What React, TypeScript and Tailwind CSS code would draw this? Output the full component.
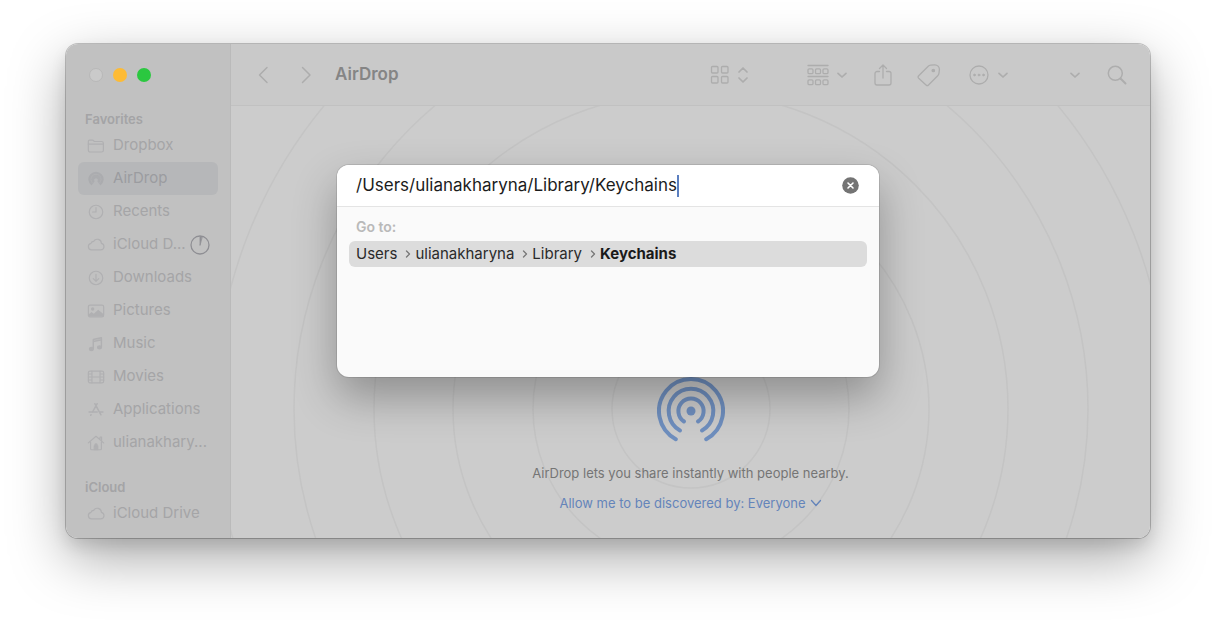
import React from "react";

type IconProps = { className?: string; children: React.ReactNode; box?: string };

function Icon({ className = "size-5", children, box = "0 0 20 20" }: IconProps) {
  return (
    <svg
      viewBox={box}
      className={`shrink-0 ${className}`}
      fill="none"
      stroke="currentColor"
      strokeWidth="1.3"
      strokeLinecap="round"
      strokeLinejoin="round"
      aria-hidden="true"
    >
      {children}
    </svg>
  );
}

const cloud = <path d="M5 15.5a3.7 3.7 0 0 1-.6-7.3 3 3 0 0 1 3-2.2 4.6 4.6 0 0 1 8.6 2.200a3.700 3.700 0 0 1-.7 7.300z" />;

const icons: Record<string, React.ReactNode> = {
  folder: (
    <>
      <path d="M1.500 6V4.800A1.300 1.300 0 0 1 2.800 3.500h3.700l1.700 1.500h8a2 2 0 0 1 2 2v7.700a2 2 0 0 1-2 2H3.500a2 2 0 0 1-2-2z" />
      <path d="M1.500 8h16.700" />
    </>
  ),
  airdrop: (
    <>
      <path d="M5 17.200A8.500 8.500 0 1 1 15 17.200L11.500 12.500a2 2 0 1 0-3 0z" stroke="none" fill="currentColor" />
      <path d="M6 14.500a5.700 5.700 0 1 1 8 0" stroke="#b6b7b9" strokeWidth="0.600" />
    </>
  ),
  clock: (
    <>
      <circle cx="10" cy="10" r="7.500" />
      <path d="M10 5v5H6.200" />
    </>
  ),
  cloud,
  download: (
    <>
      <circle cx="10" cy="10" r="7.500" />
      <path d="M10 6v7.500M7 10.700l3 3 3-3" />
    </>
  ),
  picture: (
    <>
      <rect x="1.500" y="3.500" width="17" height="13" rx="1.800" />
      <circle cx="6.300" cy="7.800" r="1.200" fill="currentColor" />
      <path d="M2 13.500l3-2.500 2.500 2 5-4.500 6 5V16H2z" fill="currentColor" stroke="none" />
    </>
  ),
  music: (
    <>
      <path d="M7 15V5l9-2v10.500M7 7.200l9-2" strokeWidth="1.600" />
      <ellipse cx="4.900" cy="15.500" rx="2.200" ry="1.800" fill="currentColor" />
      <ellipse cx="13.900" cy="13.700" rx="2.200" ry="1.800" fill="currentColor" />
    </>
  ),
  movie: (
    <>
      <rect x="1.500" y="3.500" width="17" height="13" rx="1.800" />
      <path d="M5.500 3.500v13M14.500 3.500v13M5.500 10h9M1.500 6.700h4M1.500 10h4M1.500 13.300h4M14.500 6.700h4M14.500 10h4M14.500 13.300h4" />
    </>
  ),
  apps: <path d="M8.700 3l6.800 12.300M11.300 3L6 12.500M4.500 15.200l-.4.700M2.300 12.300h9M14 12.300h3.700" strokeWidth="1.700" />,
  home: (
    <>
      <path d="M1.500 9.800L10 2.500l8.500 7.300M14.500 6V3.500h1.700v4M4 8.500v7.800c0 .7.400 1.200 1.200 1.200h9.600c.8 0 1.200-.5 1.200-1.200V8.500" />
      <path d="M8 17.500v-4.300h4v4.300z" fill="currentColor" />
      <circle cx="10" cy="12" r="1.200" fill="currentColor" />
    </>
  ),
};

function Chevron({ className = "h-[10px] w-[10px]" }: { className?: string }) {
  return (
    <Icon className={className} box="0 0 10 10">
      <path d="M1 3.300l4 3.700 4-3.700" strokeWidth="1.700" />
    </Icon>
  );
}

function SideItem({ icon, label, active, progress }: { icon: string; label: string; active?: boolean; progress?: boolean }) {
  return (
    <li>
      <a
        href="#"
        className={`flex h-[33px] items-center gap-2 rounded-md pr-2 pl-[9px] text-[15px] ${active ? "bg-[#b6b7b9] text-[#9b9ca0]" : "text-[#a5a5a7]"}`}
      >
        <Icon className={`h-[18px] w-[18px] ${active ? "text-[#abacaf]" : "text-[#b0b0b2]"}`}>{icons[icon]}</Icon>
        <span className="truncate">{label}</span>
        {progress && (
          <Icon className="-ml-1 size-5 text-[#8f8f94]">
            <circle cx="10" cy="10" r="9" />
            <path d="M10 10V1.500h2z" fill="currentColor" strokeWidth="0.800" />
          </Icon>
        )}
      </a>
    </li>
  );
}

const favorites = [
  { icon: "folder", label: "Dropbox" },
  { icon: "airdrop", label: "AirDrop", active: true },
  { icon: "clock", label: "Recents" },
  { icon: "cloud", label: "iCloud D...", progress: true },
  { icon: "download", label: "Downloads" },
  { icon: "picture", label: "Pictures" },
  { icon: "music", label: "Music" },
  { icon: "movie", label: "Movies" },
  { icon: "apps", label: "Applications" },
  { icon: "home", label: "ulianakhary..." },
];

function Sidebar() {
  return (
    <aside className="w-[165px] shrink-0 border-r border-[#bababa] bg-[#c1c1c1] px-3 pb-2">
      <div className="flex h-[62px] items-center gap-[10px] pl-[11px]">
        <button aria-label="Close" className="size-[14px] rounded-full border border-[#b8b8b8] bg-[#cacaca]" />
        <button aria-label="Minimize" className="size-[14px] rounded-full bg-[#fdbb35]" />
        <button aria-label="Zoom" className="size-[14px] rounded-full bg-[#2bc840]" />
      </div>
      <nav className="pt-[3px]">
        <h2 className="pl-[7px] text-[13px] leading-5 font-semibold text-[#a4a4a6]">Favorites</h2>
        <ul>
          {favorites.map((item) => (
            <SideItem key={item.label} {...item} />
          ))}
        </ul>
        <h2 className="mt-[18px] pl-[7px] text-[13px] leading-5 font-semibold text-[#a4a4a6]">iCloud</h2>
        <ul>
          <SideItem icon="cloud" label="iCloud Drive" />
        </ul>
      </nav>
    </aside>
  );
}

function Toolbar() {
  return (
    <header className="flex h-[62px] items-center border-b border-[#c1c1c1] bg-[#c9c9c9] px-[23px] text-[#adadad]">
      <button aria-label="Back">
        <Icon>
          <path d="M13 2.500L5.500 10l7.500 7.500" strokeWidth="1.500" />
        </Icon>
      </button>
      <button aria-label="Forward" className="ml-[22px]">
        <Icon>
          <path d="M6.500 2.500L14 10l-7.500 7.500" strokeWidth="1.500" />
        </Icon>
      </button>
      <h1 className="ml-[19px] text-[17px] font-semibold text-[#858585]">AirDrop</h1>
      <div className="ml-auto flex items-center">
        <button aria-label="View" className="flex items-center gap-2">
          <Icon>
            <rect x="1.500" y="1.500" width="6.500" height="6.500" rx="1" />
            <rect x="11.500" y="1.500" width="6.500" height="6.500" rx="1" />
            <rect x="1.500" y="11.500" width="6.500" height="6.500" rx="1" />
            <rect x="11.500" y="11.500" width="6.500" height="6.500" rx="1" />
          </Icon>
          <Icon className="h-4 w-[10px]" box="0 0 10 16">
            <path d="M1 5l4-4 4 4M1 11l4 4 4-4" strokeWidth="1.700" />
          </Icon>
        </button>
        <button aria-label="Group" className="ml-[59px] flex items-center gap-2">
          <Icon className="h-[22px] w-[22px]" box="0 0 22 22">
            <path d="M1 1.500h20M1 12.500h20" />
            {[1, 8.500, 16].map((x) => (
              <g key={x}>
                <rect x={x} y="4.800" width="5" height="4.800" rx="1.200" />
                <rect x={x} y="15.800" width="5" height="4.800" rx="1.200" />
              </g>
            ))}
          </Icon>
          <Chevron />
        </button>
        <button aria-label="Share" className="ml-[26px]">
          <Icon className="h-[22px] w-5" box="0 0 20 22">
            <path d="M6.500 7.500H4A2 2 0 0 0 2 9.500v9.500a2 2 0 0 0 2 2h12a2 2 0 0 0 2-2V9.500a2 2 0 0 0-2-2h-2.500M10 14V1.200M6.500 4.500L10 1l3.500 3.500" />
          </Icon>
        </button>
        <button aria-label="Tags" className="ml-6">
          <Icon className="h-6 w-6" box="0 0 24 24">
            <path d="M1.700 12.800L11 3.500c.8-.8 1.500-1.200 2.700-1.300l3.800-.4a4.500 4.500 0 0 1 4.900 4.900l-.4 3.300c-.1 1.100-.5 1.900-1.300 2.700l-9.200 9.300c-.8.800-1.700.8-2.500 0l-7.300-6.700c-.8-.8-.8-1.700 0-2.500z" />
            <circle cx="16.300" cy="7.500" r="1.200" fill="currentColor" />
          </Icon>
        </button>
        <button aria-label="Actions" className="ml-7 flex items-center gap-[9px]">
          <Icon>
            <circle cx="10" cy="10" r="9" />
            <g fill="currentColor" strokeWidth="0.600">
              <circle cx="5.500" cy="10" r="1" />
              <circle cx="10" cy="10" r="1" />
              <circle cx="14.500" cy="10" r="1" />
            </g>
          </Icon>
          <Chevron />
        </button>
        <button aria-label="More" className="ml-[62px]">
          <Chevron />
        </button>
        <button aria-label="Search" className="ml-[27px]">
          <Icon>
            <circle cx="8.300" cy="8.300" r="7" strokeWidth="1.500" />
            <path d="M13.500 13.500l5 5" strokeWidth="2" />
          </Icon>
        </button>
      </div>
    </header>
  );
}

function AirDropPane() {
  return (
    <main className="relative flex flex-1 flex-col items-center justify-end overflow-hidden bg-[#cccccc] pb-[25px]">
      <svg
        viewBox="0 0 1000 1000"
        className="absolute bottom-[-371px] left-1/2 size-[1000px] max-w-none -translate-x-1/2"
        fill="none"
        stroke="#c4c4c4"
        strokeWidth="1.500"
        aria-hidden="true"
      >
        {[79, 158, 238, 317, 397, 476].map((r) => (
          <circle key={r} cx="500" cy="500" r={r} />
        ))}
      </svg>
      <svg viewBox="0 0 68 68" className="relative h-[68px] w-[68px]" fill="none" stroke="#6f8fbf" strokeWidth="4" strokeLinecap="round" aria-hidden="true">
        <circle cx="34" cy="34" r="4.500" fill="#6f8fbf" stroke="none" />
        <path d="M27 44.500A12.600 12.600 0 1 1 41 44.500" />
        <path d="M23 53.500A22.300 22.300 0 1 1 45 53.500" />
        <path d="M18.800 62.200A32 32 0 1 1 49.200 62.200" />
      </svg>
      <p className="relative mt-[18px] text-[13px] leading-5 text-[#757575]">AirDrop lets you share instantly with people nearby.</p>
      <button className="relative mt-[10px] flex items-center gap-1 text-[13px] leading-5 text-[#6484ba]">
        Allow me to be discovered by: Everyone
        <Icon className="h-3 w-3" box="0 0 12 12">
          <path d="M1.500 3.500L6 8.500l4.500-5" />
        </Icon>
      </button>
    </main>
  );
}

function Separator() {
  return (
    <Icon className="ml-2 h-2 w-[6px] text-[#777777]" box="0 0 6 8">
      <path d="M1.500 1l3 3-3 3" />
    </Icon>
  );
}

function GoToFolder() {
  return (
    <section
      role="dialog"
      aria-label="Go to folder"
      className="absolute top-[121px] left-1/2 flex min-h-[212px] w-1/2 -translate-x-1/2 flex-col overflow-hidden rounded-xl bg-[#fafafa] shadow-[0_0_0_1px_rgba(0,0,0,0.1),0_20px_44px_rgba(0,0,0,0.3)]"
    >
      <div className="flex h-[42px] items-center border-b border-[#e4e4e4] bg-white pr-5 pl-[19px]">
        <input
          aria-label="Folder path"
          defaultValue="/Users/ulianakharyna/Library/Keychains"
          spellCheck={false}
          className="max-w-full bg-transparent text-[17px] text-[#1c1c1c] outline-none [field-sizing:content]"
        />
        <span className="h-[22px] w-[2px] shrink-0 bg-[#5b7fc0]" />
        <button aria-label="Clear" className="ml-auto">
          <svg viewBox="0 0 17 17" className="h-[17px] w-[17px]" aria-hidden="true">
            <circle cx="8.500" cy="8.500" r="8.300" fill="#747474" />
            <path d="M6 6l5 5M11 6l-5 5" stroke="#ffffff" strokeWidth="1.600" strokeLinecap="round" />
          </svg>
        </button>
      </div>
      <div className="px-3 pt-[10px]">
        <h2 className="pl-[7px] text-[14px] leading-5 font-semibold text-[#b9b9b9]">Go to:</h2>
        <button className="mt-1 flex h-[26px] w-full items-center rounded-md bg-[#dcdcdc] pl-[7px] text-[15px] text-[#2a2a2a]">
          <span>Users</span>
          <Separator />
          <span className="ml-1">ulianakharyna</span>
          <Separator />
          <span className="ml-1">Library</span>
          <Separator />
          <span className="ml-1 font-bold text-[#1a1a1a]">Keychains</span>
        </button>
      </div>
    </section>
  );
}

export default function App() {
  return (
    <div className="min-h-screen bg-white px-[66px] pt-11 font-['Inter','Liberation_Sans',sans-serif]">
      <div className="relative rounded-xl shadow-[0_0_0_1px_rgba(0,0,0,0.22),0_20px_56px_rgba(0,0,0,0.34),0_8px_16px_rgba(0,0,0,0.1)]">
        <div className="flex overflow-hidden rounded-xl">
          <Sidebar />
          <div className="flex min-w-0 flex-1 flex-col">
            <Toolbar />
            <AirDropPane />
          </div>
        </div>
        <GoToFolder />
      </div>
    </div>
  );
}
